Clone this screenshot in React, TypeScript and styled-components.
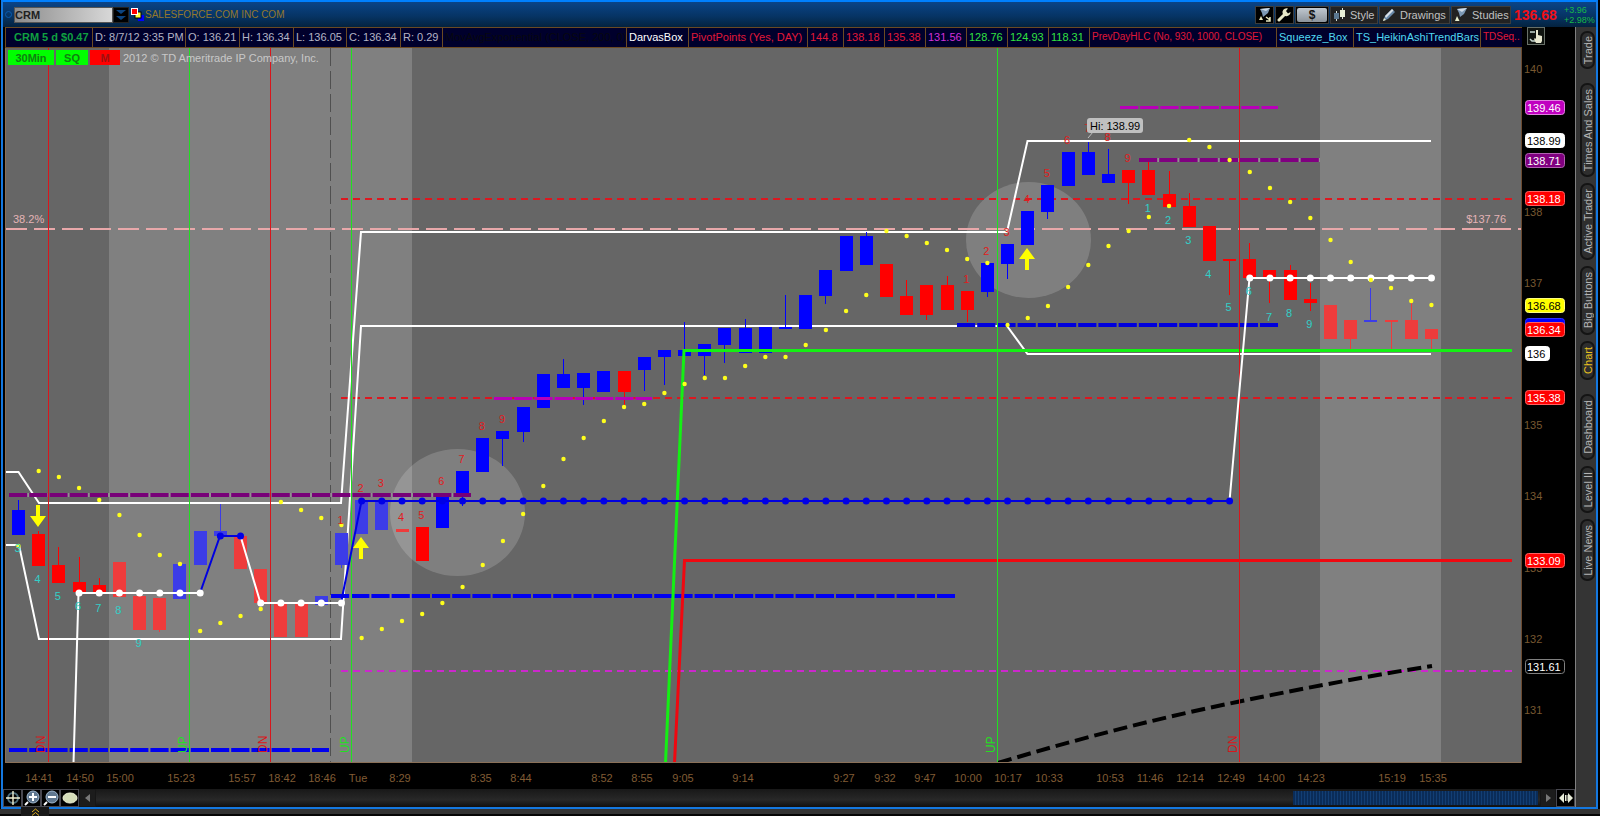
import React from 'react';
import styled, { createGlobalStyle } from 'styled-components';

const GlobalStyle = createGlobalStyle`
  * { box-sizing: border-box; }
  html, body { margin: 0; background: #000; }
  body, button, input { font-family: "Liberation Sans", Arial, sans-serif; font-size: 11px; }
  button { padding: 0; border: 0; cursor: pointer; }
`;

/* ---------- chart data, in plot units ---------- */

const PLOT = { x: 5, y: 48, w: 1517, h: 715 };
const BAR_STEP = 20.185;
const barX = (i: number) => 18.5 + BAR_STEP * i;
const pctX = (x: number) => `${((x - PLOT.x) / PLOT.w) * 100}%`;
const pctY = (y: number) => `${((y - PLOT.y) / PLOT.h) * 100}%`;

const TONES = { b: '#0000ff', r: '#ff0000', lb: '#3c3ce8', lr: '#ee3c3c' };
type Tone = keyof typeof TONES;

/* tone, body top, body bottom, high, low */
const candles: [Tone, number, number, number?, number?][] = [
  ['b', 510, 535, 500], ['r', 534, 566, 531], ['r', 565, 583, 547], ['r', 582, 592, 557],
  ['r', 585, 593, 578], ['lr', 562, 597], ['lr', 596, 630], ['lr', 598, 630, 598, 632],
  ['lb', 564, 599], ['lb', 531, 565], ['lb', 531, 536, 504], ['lr', 536, 569],
  ['lr', 569, 603], ['lr', 604, 637], ['lr', 604, 637], ['lb', 596, 605],
  ['lb', 533, 565, 533, 568], ['lb', 500, 534], ['lb', 500, 530], ['lr', 529, 532],
  ['r', 527, 561], ['b', 497, 528], ['b', 471, 494, 471, 506], ['b', 438, 472],
  ['b', 431, 439, 431, 466], ['b', 407, 432, 407, 442], ['b', 374, 408], ['b', 374, 388, 359],
  ['b', 373, 388, 373, 405], ['b', 371, 392], ['r', 371, 392, 371, 405], ['b', 357, 370, 357, 391],
  ['b', 350, 357, 350, 385], ['b', 350, 356, 322], ['b', 344, 356, 344, 375], ['b', 328, 345, 328, 363],
  ['b', 328, 353, 319], ['b', 327, 353], ['b', 327, 329, 295], ['b', 295, 329],
  ['b', 270, 296, 270, 304], ['b', 236, 271], ['b', 236, 265, 232], ['r', 264, 297],
  ['r', 296, 315, 280], ['r', 285, 315, 285, 320], ['r', 285, 310, 276], ['r', 291, 310, 291, 322],
  ['b', 263, 292, 263, 297], ['b', 244, 264, 244, 279], ['b', 211, 245], ['b', 185, 212, 185, 219],
  ['b', 152, 186], ['b', 152, 175, 142], ['b', 174, 183, 149], ['r', 170, 183, 170, 204],
  ['r', 170, 195, 162], ['r', 194, 207, 171], ['r', 206, 227, 193], ['r', 226, 261],
  ['r', 259, 261, 259, 295], ['r', 259, 278, 243], ['r', 270, 277, 270, 303], ['r', 270, 300, 265],
  ['r', 299, 303, 283, 311], ['lr', 305, 339], ['lr', 320, 339, 320, 350], ['lb', 320, 322, 288],
  ['lr', 320, 322, 320, 350], ['lr', 320, 339, 303], ['lr', 329, 339, 329, 350],
];

const sarDots = [
  546, 471, 477, 488, 500, 515, 535, 555, 564, 631, 623, 616, 609, 502, 510, 518, 525, 638, 629, 621,
  614, 603, 587, 565, 541, 514, 486, 459, 438, 421, 407, 404, 393, 384, 378, 378, 366, 357, 357, 345,
  330, 311, 295, 231, 236, 243, 250, 259, 263, 325, 318, 306, 287, 265, 246, 231, 217, 206, 140, 147,
  160, 172, 188, 202, 218, 240, 262, 280, 288, 301, 305,
];

/* first bar, colour, vertical centre of each count */
const counts: { bar: number; first: number; color: string; ys: number[] }[] = [
  { bar: 0, first: 3, color: '#30d0c8', ys: [548, 579, 596, 606, 608, 610, 643] },
  { bar: 16, first: 1, color: '#e01c20', ys: [520, 488, 483, 517, 515, 481, 459, 426, 419] },
  { bar: 47, first: 1, color: '#e01c20', ys: [279, 251, 232, 199, 173, 140, 128, 137, 158] },
  { bar: 56, first: 1, color: '#30d0c8', ys: [208, 220, 240, 274, 307, 291, 317, 313, 324] },
];

const trendDots = [
  { from: 3, to: 9, y: 593, color: '#fff' },
  { from: 10, to: 11, y: 536, color: '#0000e6' },
  { from: 12, to: 16, y: 603, color: '#fff' },
  { from: 17, to: 60, y: 501, color: '#0000e6' },
  { from: 61, to: 70, y: 278, color: '#fff' },
];

const levels = [
  { x1: 9, x2: 471, y: 495, color: '#780078', w: 4 },
  { x1: 1139, x2: 1320, y: 160, color: '#800080', w: 4 },
  { x1: 1120, x2: 1278, y: 107.5, color: '#b800b8', w: 3 },
  { x1: 494, x2: 652, y: 398.5, color: '#b800b8', w: 3 },
  { x1: 9, x2: 329, y: 750, color: '#0000f0', w: 4 },
  { x1: 331, x2: 955, y: 596, color: '#0000f0', w: 4 },
  { x1: 957, x2: 1278, y: 325, color: '#0000dc', w: 4 },
];

const signals = [
  { x: 48.5, label: 'DN', color: '#d8161c' },
  { x: 189.5, label: 'UP', color: '#20e020' },
  { x: 270.5, label: 'DN', color: '#d8161c' },
  { x: 351.5, label: 'UP', color: '#20e020' },
  { x: 997.5, label: 'UP', color: '#20e020' },
  { x: 1239.5, label: 'DN', color: '#d8161c' },
];

const priceTicks: [string, number][] = [
  ['140', 69], ['138', 212], ['137', 283], ['135', 425], ['134', 496], ['133', 568], ['132', 639], ['131', 710],
];

const priceTags: { v: string; y: number; bg: string; fg: string; edge: string }[] = [
  { v: '139.46', y: 107, bg: '#c000c0', fg: '#fff', edge: '#e080e0' },
  { v: '138.99', y: 140, bg: '#fff', fg: '#000', edge: '#fff' },
  { v: '138.71', y: 160, bg: '#800080', fg: '#fff', edge: '#b060b0' },
  { v: '138.18', y: 198, bg: '#ff0000', fg: '#fff', edge: '#ff6060' },
  { v: '136.68', y: 305, bg: '#ffff00', fg: '#000', edge: '#ffff80' },
  { v: '136.4', y: 325, bg: '#0000ff', fg: '#fff', edge: '#3030ff' },
  { v: '136.34', y: 329, bg: '#ff0000', fg: '#fff', edge: '#ff6060' },
  { v: '136', y: 353, bg: '#fff', fg: '#000', edge: '#fff' },
  { v: '135.38', y: 397, bg: '#ff0000', fg: '#fff', edge: '#ff6060' },
  { v: '133.09', y: 560, bg: '#ff0000', fg: '#fff', edge: '#ff6060' },
  { v: '131.61', y: 666, bg: '#000', fg: '#fff', edge: '#808080' },
];

const timeTicks: [string, number][] = [
  ['14:41', 39], ['14:50', 80], ['15:00', 120], ['15:23', 181], ['15:57', 242], ['18:42', 282],
  ['18:46', 322], ['Tue', 358], ['8:29', 400], ['8:35', 481], ['8:44', 521], ['8:52', 602],
  ['8:55', 642], ['9:05', 683], ['9:14', 743], ['9:27', 844], ['9:32', 885], ['9:47', 925],
  ['10:00', 968], ['10:17', 1008], ['10:33', 1049], ['10:53', 1110], ['11:46', 1150], ['12:14', 1190],
  ['12:49', 1231], ['14:00', 1271], ['14:23', 1311], ['15:19', 1392], ['15:35', 1433],
];

const studies: { text: string; w: number; color: string; lead?: boolean; compact?: boolean }[] = [
  { text: 'CRM 5 d $0.47', w: 87, color: '#10a040', lead: true },
  { text: 'D: 8/7/12 3:35 PM', w: 93, color: '#b4b4c4' },
  { text: 'O: 136.21', w: 54, color: '#b4b4c4' },
  { text: 'H: 136.34', w: 54, color: '#b4b4c4' },
  { text: 'L: 136.05', w: 53, color: '#b4b4c4' },
  { text: 'C: 136.34', w: 54, color: '#b4b4c4' },
  { text: 'R: 0.29', w: 42, color: '#b4b4c4' },
  { text: 'MovAvgExponential (CLOSE, 200, 0)', w: 184, color: '#08080f' },
  { text: 'DarvasBox', w: 62, color: '#ffffff' },
  { text: 'PivotPoints (Yes, DAY)', w: 119, color: '#e01838' },
  { text: '144.8', w: 36, color: '#e01838' },
  { text: '138.18', w: 41, color: '#e01838' },
  { text: '135.38', w: 41, color: '#e01838' },
  { text: '131.56', w: 41, color: '#d030d8' },
  { text: '128.76', w: 41, color: '#30e040' },
  { text: '124.93', w: 41, color: '#30e040' },
  { text: '118.31', w: 41, color: '#30e040' },
  { text: 'PrevDayHLC (No, 930, 1000, CLOSE)', w: 187, color: '#e01838', compact: true },
  { text: 'Squeeze_Box', w: 77, color: '#50d8f0' },
  { text: 'TS_HeikinAshiTrendBars', w: 127, color: '#50d8f0' },
  { text: 'TDSeq..', w: 42, color: '#e01838', compact: true },
];

const tabGroups = [
  [{ t: 'Trade', h: 38 }],
  [{ t: 'Times And Sales', h: 94 }, { t: 'Active Trader', h: 77 }, { t: 'Big Buttons', h: 69 }, { t: 'Chart', h: 39 }],
  [{ t: 'Dashboard', h: 66 }, { t: 'Level II', h: 47 }, { t: 'Live News', h: 62 }],
];

/* ---------- layout ---------- */

const Page = styled.div`
  min-height: 100vh;
  display: flex;
  flex-direction: column;
  background: #000;
`;

const Window = styled.div`
  flex: 1;
  display: flex;
  flex-direction: column;
  margin: 0 2px 0 1px;
  border: 2px solid #1478e0;
  border-top-color: #0080ff;
`;

const Header = styled.header`
  height: 25px;
  display: flex;
  align-items: center;
  padding: 0 0 0 2px;
  background: linear-gradient(#0a4488, #063362 60%, #04223f);
`;

const Ring = styled.span`
  width: 7px;
  height: 7px;
  margin-right: 2px;
  border: 1px solid #0a5cb0;
  border-radius: 50%;
`;

const SymbolInput = styled.input`
  width: 99px;
  height: 16px;
  padding: 0;
  border: 1px solid #555;
  border-radius: 0;
  background: linear-gradient(90deg, #8c8c8c, #d8d8d8);
  color: #202020;
  font-weight: bold;
  outline: none;
`;

const DropButton = styled.button`
  width: 16px;
  height: 16px;
  margin-right: 2px;
  background: #000;
  display: grid;
  place-items: center;
  border: 1px solid #222;
`;

const Company = styled.span`
  flex: 1;
  padding-left: 1px;
  font-size: 10px;
  color: #94782c;
  white-space: nowrap;
`;

const Tools = styled.div`
  display: flex;
  gap: 1px;
`;

const ToolButton = styled.button<{ $w: number; $flat?: boolean }>`
  width: ${(p) => p.$w}px;
  height: 18px;
  display: flex;
  align-items: center;
  justify-content: ${(p) => (p.$flat ? 'flex-start' : 'center')};
  gap: 4px;
  padding-left: ${(p) => (p.$flat ? 2 : 0)}px;
  background: ${(p) => (p.$flat ? '#222' : '#000')};
  border: 1px solid #3c3c3c;
  color: #c0c0c0;
`;

const DollarFace = styled.span`
  width: 30px;
  height: 14px;
  line-height: 14px;
  border-radius: 2px;
  background: linear-gradient(#c0c8d0, #8c949c);
  color: #111;
  font-size: 12px;
  font-weight: bold;
`;

const LastPrice = styled.strong`
  width: 53px;
  padding-left: 3px;
  font-size: 14px;
  color: #f01018;
`;

const Change = styled.div`
  width: 32px;
  font-size: 9px;
  line-height: 10px;
  color: #18b848;
  white-space: nowrap;
`;

const Body = styled.div`
  flex: 1;
  display: flex;
`;

const Main = styled.main`
  flex: 1;
  min-width: 0;
  display: flex;
  flex-direction: column;
`;

const ChartGrid = styled.div`
  flex: 1;
  display: grid;
  grid-template-columns: minmax(0, 1fr) 53px;
  grid-template-rows: 21px minmax(400px, 1fr) 26px;
  padding-left: 2px;
`;

const StudyBar = styled.div`
  display: flex;
  overflow: hidden;
  background: #00002c;
  border: solid #6b4a22;
  border-width: 1px 0 1px 1px;
`;

const Study = styled.span<{ $w: number; $color: string; $lead?: boolean; $compact?: boolean }>`
  flex: 0 0 ${(p) => p.$w}px;
  padding-left: ${(p) => (p.$lead ? 8 : 2)}px;
  border-right: 1px solid #6b4a22;
  font-size: ${(p) => (p.$compact ? 10 : 11)}px;
  line-height: 18px;
  font-weight: ${(p) => (p.$lead ? 'bold' : 'normal')};
  color: ${(p) => p.$color};
  white-space: nowrap;
  overflow: hidden;
`;

const AxisCorner = styled.div`
  padding-left: 5px;
`;

const Plot = styled.section`
  position: relative;
  background: #666;
`;

const Layer = styled.svg`
  position: absolute;
  inset: 0;
  width: 100%;
  height: 100%;
  font-size: 11px;
`;

const PlotBadges = styled.div`
  position: absolute;
  top: 2px;
  left: 3px;
  display: flex;
  gap: 2px;
  align-items: center;
`;

const PlotBadge = styled.span<{ $w: number; $bg: string; $fg: string }>`
  width: ${(p) => p.$w}px;
  height: 15px;
  line-height: 16px;
  text-align: center;
  font-weight: bold;
  background: ${(p) => p.$bg};
  color: ${(p) => p.$fg};
`;

const Copyright = styled.span`
  padding-left: 1px;
  color: #c8c8c8;
  white-space: nowrap;
`;

const AxisBox = styled.div`
  position: relative;
  background: #000;
`;

const Toolbar = styled.div`
  height: 18px;
  display: flex;
  background: linear-gradient(#181818, #282828 60%, #101010);
`;

const IconButton = styled.button<{ $w?: number; $plain?: boolean }>`
  width: ${(p) => p.$w ?? 19}px;
  height: 18px;
  display: grid;
  place-items: center;
  background: ${(p) => (p.$plain ? '#1c1c1c' : '#000')};
  border: 1px solid ${(p) => (p.$plain ? '#161616' : '#484850')};
`;

const Track = styled.div`
  flex: 1;
  display: flex;
  justify-content: flex-end;
  padding: 2px 2px 2px 0;
`;

const Thumb = styled.div`
  flex: 0 0 17%;
  background: repeating-linear-gradient(90deg, #0a2c58 0 2px, #123e74 2px 3px);
`;

const Sidebar = styled.nav`
  flex: 0 0 21px;
  display: flex;
  flex-direction: column;
  gap: 14px;
  padding: 4px 0 0 4px;
  background: #343434;
  border-left: 1px solid #808080;
`;

const TabGroup = styled.div`
  display: flex;
  flex-direction: column;
  gap: 6px;
`;

const Tab = styled.button<{ $h: number; $active: boolean }>`
  width: 15px;
  height: ${(p) => p.$h}px;
  display: grid;
  place-items: center;
  border: 2px solid #141414;
  border-radius: 7px;
  background: #2e2e2e;
  color: ${(p) => (p.$active ? '#e8c020' : '#b4b4b4')};

  span {
    writing-mode: vertical-rl;
    transform: rotate(180deg);
    line-height: 12px;
    white-space: nowrap;
  }
`;

const Footer = styled.footer`
  height: 7px;
  padding-left: 21px;
  background: #333;
  border-bottom: 2px solid #050505;
`;

const FooterTab = styled.button`
  position: relative;
  top: -2px;
  display: grid;
  place-items: center;
  width: 28px;
  height: 9px;
  background: #181818;
`;

/* ---------- icons ---------- */

const Funnel = () => (
  <svg width="15" height="15" viewBox="0 0 15 15">
    <path d="M3 2 L13 1 L11 6 L6 10 L5 6 Z" fill="#7c98b4" />
    <path d="M3 2 L13 1 L9 4 Z" fill="#d0dce8" />
    <path d="M4 9 L6 13 H2 Z" fill="#e8e8c0" />
    <path d="M9 10 L13 13 M13 10 V14 H9" stroke="#e8e8c0" strokeWidth="1.500" fill="none" />
  </svg>
);

const Wrench = () => (
  <svg width="15" height="15" viewBox="0 0 15 15">
    <path d="M2 13 L8 7" stroke="#e8e8c8" strokeWidth="3" strokeLinecap="round" />
    <path d="M11 1.500 A4 4 0 1 0 13.500 5 L11 6.500 L9 4 Z" fill="#e8e8c8" />
  </svg>
);

const StyleIcon = () => (
  <svg width="13" height="14" viewBox="0 0 13 14">
    <path d="M3.5 3 V13 M9.5 0 V11" stroke="#d8e0d8" />
    <rect x="1" y="5" width="5" height="6" fill="#5c7890" />
    <rect x="7" y="2" width="5" height="7" fill="#e8f0d8" />
  </svg>
);

const Pencil = () => (
  <svg width="14" height="14" viewBox="0 0 14 14">
    <path d="M1 13 L3 8 L10 1 L13 4 L6 11 Z" fill="#6888a8" />
    <path d="M3 8 L10 1 L11.500 2.500 L4 10 Z" fill="#d8e0e8" />
    <path d="M1 13 L2 10 L4 12 Z" fill="#e8e8c8" />
  </svg>
);

const StudiesIcon = () => (
  <svg width="14" height="14" viewBox="0 0 14 14">
    <path d="M3 1 L13 0 L10 6 L6 9 L5 5 Z" fill="#7c98b4" />
    <path d="M3 1 L13 0 L8 4 Z" fill="#d0dce8" />
    <path d="M3 8 L5.500 13 H1 Z" fill="#e8f0d0" />
  </svg>
);

const Hand = () => (
  <svg width="18" height="18" viewBox="0 0 18 18">
    <rect x=".5" y=".5" width="17" height="17" fill="#101410" stroke="#687068" />
    <path d="M3 5 H8 M3 12 L5 14 H9" stroke="#c8d8d0" strokeWidth="1.500" fill="none" />
    <path d="M9 3 h2 v5 l4 1 v5 l-1 2 h-5 l-2 -4 1 -1 1 1 Z" fill="#e8e8d0" />
  </svg>
);

const Zoom = ({ plus }: { plus?: boolean }) => (
  <svg width="16" height="16" viewBox="0 0 16 16">
    <path d="M1 15 L4 12" stroke="#fff" strokeWidth="2" />
    <circle cx="9" cy="7" r="6" fill="#607890" stroke="#a0b8d0" />
    <path d={plus ? 'M5 7 H13 M9 3 V11' : 'M5 7 H13'} stroke="#fff" strokeWidth="2" />
  </svg>
);

const Crosshair = () => (
  <svg width="16" height="16" viewBox="0 0 16 16">
    <circle cx="8" cy="8" r="5" fill="none" stroke="#50707c" strokeWidth="2" />
    <path d="M1 8 H15 M8 1 V15" stroke="#f0f0d0" strokeWidth="1.400" />
  </svg>
);

/* ---------- chart ---------- */

const upArrow = (x: number, y: number) => `M${x} ${y} l8 11 h-6 v11 h-4 v-11 h-6 Z`;

const ChartShapes = () => (
  <Layer viewBox={`${PLOT.x} ${PLOT.y} ${PLOT.w} ${PLOT.h}`} preserveAspectRatio="none" fill="none">
    <rect x="109" y="48" width="303" height="715" fill="#808080" />
    <rect x="1320" y="48" width="121" height="715" fill="#808080" />
    <ellipse cx="457.5" cy="512.5" rx="67.5" ry="63.5" fill="#fff" fillOpacity=".17" />
    <ellipse cx="1028.5" cy="240" rx="62.5" ry="58" fill="#fff" fillOpacity=".17" />
    <path d="M330.5 48 V763" stroke="#505050" strokeDasharray="18 5" />

    <path d="M6 229 H1522" stroke="#e8a8aa" strokeWidth="2" strokeDasharray="21 7" />
    <path d="M341 199 H1512 M341 398 H1512" stroke="#dc1820" strokeWidth="2" strokeDasharray="7 5" />
    <path d="M341 671 H1512" stroke="#cc28cc" strokeWidth="2" strokeDasharray="7 5" />
    <path d="M9 495 H471 M1139 160 H1320" stroke="#909090" strokeWidth="4" />
    <path d="M998 763 Q1120 726 1237 702 T1432 666" stroke="#000" strokeWidth="4" strokeDasharray="14 6" />
    <path d="M6 472 H18.500 L39 503 H341 L361 232 H1007 L1027.500 141 H1431" stroke="#fff" strokeWidth="2" />
    <path d="M6 545 H19 L39 639 H341 L361 326 H1007 L1027.500 354 H1431" stroke="#fff" strokeWidth="2" />

    {candles.map(([tone, top, bottom, high, low], i) => {
      const x = Math.round(barX(i) - 6.5);
      return (
        <g key={i} fill={TONES[tone]}>
          <rect x={x} y={top} width="13" height={bottom - top} />
          <rect x={x + 6} y={high ?? top} width="1" height={(low ?? bottom) - (high ?? top)} />
        </g>
      );
    })}

    {levels.map((l) => (
      <path
        key={`${l.x1}-${l.y}`}
        d={`M${l.x1} ${l.y} H${l.x2}`}
        stroke={l.color}
        strokeWidth={l.w}
        strokeDasharray="18.2 2"
      />
    ))}
    <path d="M665.500 763 L684 350.500 H1512" stroke="#14f014" strokeWidth="3" />
    <path d="M674.500 763 L684.500 560.500 H1512" stroke="#f00810" strokeWidth="3" />

    {signals.map((s) => (
      <path key={s.x} d={`M${s.x} 48 V763`} stroke={s.color} />
    ))}

    <path d="M73.500 763 L78.500 593 H200" stroke="#fff" strokeWidth="2" />
    <path d="M240.500 536 L260.500 603 H341" stroke="#fff" strokeWidth="2" />
    <path d="M1229.500 501 L1249.500 278 H1431" stroke="#fff" strokeWidth="2" />
    <path d="M200 593 L220 536 H240.500 M341 603 L361.500 501 H1229.500" stroke="#0000e0" strokeWidth="2" />
    {trendDots.flatMap((d) =>
      Array.from({ length: d.to - d.from + 1 }, (_, k) => (
        <circle key={d.from + k} cx={barX(d.from + k)} cy={d.y} r="3.5" fill={d.color} />
      )),
    )}
    {sarDots.map((y, i) => (
      <circle key={i} cx={barX(i)} cy={y} r="2.2" fill="#ffff1c" />
    ))}
    <path d={upArrow(361, 537)} fill="#ff0" />
    <path d={upArrow(1027, 248)} fill="#ff0" />
    <path d="M38 527 l8 -11 h-6 v-11 h-4 v11 h-6 Z" fill="#ff0" />
    <path d="M5.500 48 V762.500 H1522" stroke="#8a7058" />
    <path d="M1521.500 48 V763" stroke="#6b4a30" />
  </Layer>
);

const ChartLabels = () => (
  <Layer>
    {counts.flatMap((c) =>
      c.ys.map((y, k) => (
        <text key={`${c.bar}-${k}`} x={pctX(barX(c.bar + k) - 1)} y={pctY(y)} dy="4" textAnchor="middle" fill={c.color}>
          {c.first + k}
        </text>
      )),
    )}
    {signals.map((s) => (
      <svg key={s.x} x={pctX(s.x - 3)} y={pctY(753)} overflow="visible">
        <text transform="rotate(-90)" fill={s.color} fontSize="12">{s.label}</text>
      </svg>
    ))}
    <g fill="#e4b4b6">
      <text x={pctX(13)} y={pctY(219)} dy="4">38.2%</text>
      <text x={pctX(1506)} y={pctY(219)} dy="4" textAnchor="end">$137.76</text>
    </g>
    <svg x={pctX(1087)} y={pctY(118)} overflow="visible">
      <path d="M6 14 L1 20" stroke="#c0c0c0" />
      <rect width="56" height="15" rx="3" fill="#c0c0c0" />
      <text x="3" y="12" fill="#000">Hi: 138.99</text>
    </svg>
  </Layer>
);

const PriceAxis = () => (
  <AxisBox>
    <Layer>
      {priceTicks.map(([v, y]) => (
        <text key={v} x="2" y={pctY(y)} dy="4" fill="#785830">{v}</text>
      ))}
      {priceTags.map((t) => (
        <svg key={t.v} x="3" y={pctY(t.y - 7)} overflow="visible">
          <rect x=".5" y=".5" width={t.v.length === 3 ? 24 : 39} height="14" rx="3" fill={t.bg} stroke={t.edge} />
          <text x="2" y="12" fill={t.fg}>{t.v}</text>
        </svg>
      ))}
    </Layer>
  </AxisBox>
);

const TimeAxis = () => (
  <AxisBox>
    <Layer>
      {timeTicks.map(([v, x]) => (
        <text key={v} x={pctX(x)} y="19" textAnchor="middle" fill="#805c34">{v}</text>
      ))}
    </Layer>
  </AxisBox>
);

export default function App() {
  return (
    <Page>
      <GlobalStyle />
      <Window>
        <Header>
          <Ring />
          <SymbolInput aria-label="Symbol" defaultValue="CRM" />
          <DropButton aria-label="Choose symbol">
            <svg width="10" height="12" viewBox="0 0 10 12">
              <path d="M0 1 H10 L5 5 Z M0 7 H10 L5 11 Z" fill="#0c4480" />
            </svg>
          </DropButton>
          <svg width="13" height="13" viewBox="0 0 13 13">
            <rect x="7" y="7" width="6" height="6" fill="#0000ff" />
            <rect x="4" y="4" width="6" height="6" fill="#ffff40" stroke="#000" />
            <rect x=".5" y=".5" width="6" height="6" fill="#f00" stroke="#fff" />
          </svg>
          <Company>SALESFORCE.COM INC COM</Company>
          <Tools>
            <ToolButton $w={19} aria-label="Flexible layout"><Funnel /></ToolButton>
            <ToolButton $w={19} aria-label="Settings"><Wrench /></ToolButton>
            <ToolButton $w={34} aria-label="Show price"><DollarFace>$</DollarFace></ToolButton>
            <ToolButton $w={48} $flat><StyleIcon />Style</ToolButton>
            <ToolButton $w={71} $flat><Pencil />Drawings</ToolButton>
            <ToolButton $w={60} $flat><StudiesIcon />Studies</ToolButton>
          </Tools>
          <LastPrice>136.68</LastPrice>
          <Change>+3.96<br />+2.98%</Change>
        </Header>
        <Body>
          <Main>
            <ChartGrid>
              <StudyBar>
                {studies.map((s) => (
                  <Study key={s.text} $w={s.w} $color={s.color} $lead={s.lead} $compact={s.compact}>{s.text}</Study>
                ))}
              </StudyBar>
              <AxisCorner><Hand /></AxisCorner>
              <Plot>
                <ChartShapes />
                <ChartLabels />
                <PlotBadges>
                  <PlotBadge $w={46} $bg="#00ff00" $fg="#108010">30Min</PlotBadge>
                  <PlotBadge $w={32} $bg="#00ff00" $fg="#108010">SQ</PlotBadge>
                  <PlotBadge $w={30} $bg="#ff0000" $fg="#a01010">M</PlotBadge>
                  <Copyright>2012 © TD Ameritrade IP Company, Inc.</Copyright>
                </PlotBadges>
              </Plot>
              <PriceAxis />
              <TimeAxis />
            </ChartGrid>
            <Toolbar>
              <IconButton aria-label="Crosshair"><Crosshair /></IconButton>
              <IconButton aria-label="Zoom in"><Zoom plus /></IconButton>
              <IconButton aria-label="Zoom out"><Zoom /></IconButton>
              <IconButton aria-label="Ellipse">
                <svg width="16" height="12" viewBox="0 0 16 12">
                  <ellipse cx="8" cy="6" rx="7" ry="5" fill="#d4dcb8" stroke="#f0f4d8" />
                </svg>
              </IconButton>
              <IconButton $w={17} $plain aria-label="Scroll left">
                <svg width="6" height="8"><path d="M5 0 V8 L0 4 Z" fill="#787878" /></svg>
              </IconButton>
              <Track><Thumb /></Track>
              <IconButton $w={16} $plain aria-label="Scroll right">
                <svg width="6" height="8"><path d="M1 0 V8 L6 4 Z" fill="#787878" /></svg>
              </IconButton>
              <IconButton aria-label="Fit width">
                <svg width="14" height="10" viewBox="0 0 14 10">
                  <path d="M5 0 V10 L0 5 Z M9 0 V10 L14 5 Z M6 2 h1 v6 h-1 Z M7.500 2 h1 v6 h-1 Z" fill="#e8ecd8" />
                </svg>
              </IconButton>
            </Toolbar>
          </Main>
          <Sidebar>
            {tabGroups.map((group, i) => (
              <TabGroup key={i}>
                {group.map((tab) => (
                  <Tab key={tab.t} $h={tab.h} $active={tab.t === 'Chart'}><span>{tab.t}</span></Tab>
                ))}
              </TabGroup>
            ))}
          </Sidebar>
        </Body>
      </Window>
      <Footer>
        <FooterTab aria-label="Expand panel">
          <svg width="9" height="8" viewBox="0 0 9 8">
            <path d="M1 4 L4.500 1 L8 4 M1 7.500 L4.500 4.500 L8 7.500" stroke="#e0b020" fill="none" />
          </svg>
        </FooterTab>
      </Footer>
    </Page>
  );
}
